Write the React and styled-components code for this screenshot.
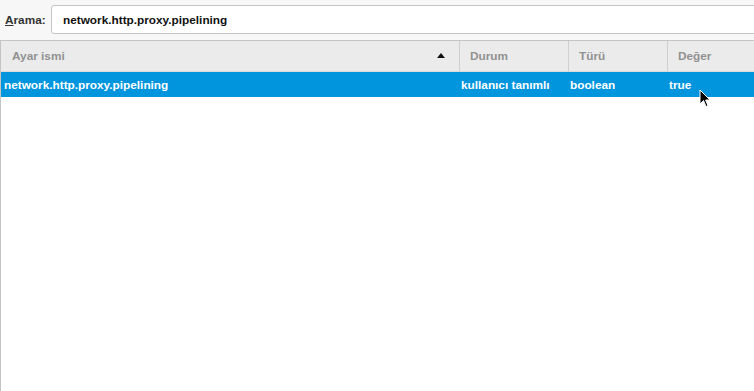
import styled, { createGlobalStyle } from 'styled-components';

const GlobalStyle = createGlobalStyle`
  html, body {
    margin: 0;
    padding: 0;
    background: #ffffff;
    overflow: hidden;
  }
  body {
    font-family: "Liberation Sans", Arial, sans-serif;
  }
`;

const Page = styled.div`
  width: 754px;
  height: 391px;
  display: flex;
  flex-direction: column;
  position: relative;
  overflow: hidden;
  background: #ffffff;
`;

const SearchBar = styled.div`
  height: 40px;
  display: flex;
  align-items: center;
  gap: 4px;
  padding-left: 5px;
  background: #f7f7f7;
  box-sizing: border-box;
`;

const Label = styled.label`
  font-size: 11.8px;
  font-weight: bold;
  color: #333;
  width: 42px;

  u {
    text-decoration: underline;
  }
`;

const SearchInput = styled.div`
  flex: 1;
  height: 29px;
  margin-right: -10px;
  margin-top: -1px;
  display: flex;
  align-items: center;
  padding-left: 11px;
  background: #fff;
  border: 1px solid #c4c4c4;
  border-radius: 3px;
  font-size: 11.8px;
  font-weight: bold;
  color: #111;
  box-sizing: border-box;
`;

const Table = styled.div`
  flex: 1;
  display: flex;
  flex-direction: column;
  border-top: 1px solid #c4c4c4;
  border-left: 1px solid #c4c4c4;
`;

const HeaderRow = styled.div`
  height: 30px;
  display: grid;
  grid-template-columns: 458px 109px 99px 1fr;
  align-items: center;
  background: #ebebeb;
  border-bottom: 1px solid #dadada;
`;

const HeaderCell = styled.div`
  display: flex;
  align-items: center;
  height: 100%;
  padding-left: ${p => p.$pad}px;
  padding-right: 14px;
  font-size: 11.8px;
  font-weight: bold;
  color: #919191;
  border-left: ${p => (p.$first ? 'none' : '1px solid #d0d0d0')};
  box-sizing: border-box;
`;

const Spacer = styled.span`
  flex: 1;
`;

const SortArrow = styled.span`
  width: 0;
  height: 0;
  border-left: 4px solid transparent;
  border-right: 4px solid transparent;
  border-bottom: 5px solid #111;
  margin-top: -1px;
`;

const Row = styled.div`
  height: 25px;
  display: grid;
  grid-template-columns: 458px 109px 99px 1fr;
  align-items: center;
  background: ${p => (p.$selected ? '#0095dd' : 'transparent')};
  color: ${p => (p.$selected ? '#fff' : '#111')};
`;

const Cell = styled.div`
  padding-left: ${p => p.$pad}px;
  font-size: 11.8px;
  font-weight: bold;
  white-space: nowrap;
`;

const Cursor = styled.svg`
  position: absolute;
  left: 699px;
  top: 89px;
`;

export default function App() {
  return (
    <Page>
      <GlobalStyle />
      <SearchBar>
        <Label><u>A</u>rama:</Label>
        <SearchInput>network.http.proxy.pipelining</SearchInput>
      </SearchBar>
      <Table>
        <HeaderRow>
          <HeaderCell $first $pad={11}>
            Ayar ismi
            <Spacer />
            <SortArrow />
          </HeaderCell>
          <HeaderCell $pad={10}>Durum</HeaderCell>
          <HeaderCell $pad={10}>Türü</HeaderCell>
          <HeaderCell $pad={10}>Değer</HeaderCell>
        </HeaderRow>
        <Row $selected>
          <Cell $pad={3}>network.http.proxy.pipelining</Cell>
          <Cell $pad={2}>kullanıcı tanımlı</Cell>
          <Cell $pad={2}>boolean</Cell>
          <Cell $pad={2}>true</Cell>
        </Row>
      </Table>
      <Cursor width="12" height="19" viewBox="0 0 12 19">
        <path d="M1 1 L1 15 L4.5 11.5 L7 17.5 L9 16.6 L6.6 11 L11 11 Z" fill="#000" stroke="#fff" strokeWidth="1" />
      </Cursor>
    </Page>
  );
}
